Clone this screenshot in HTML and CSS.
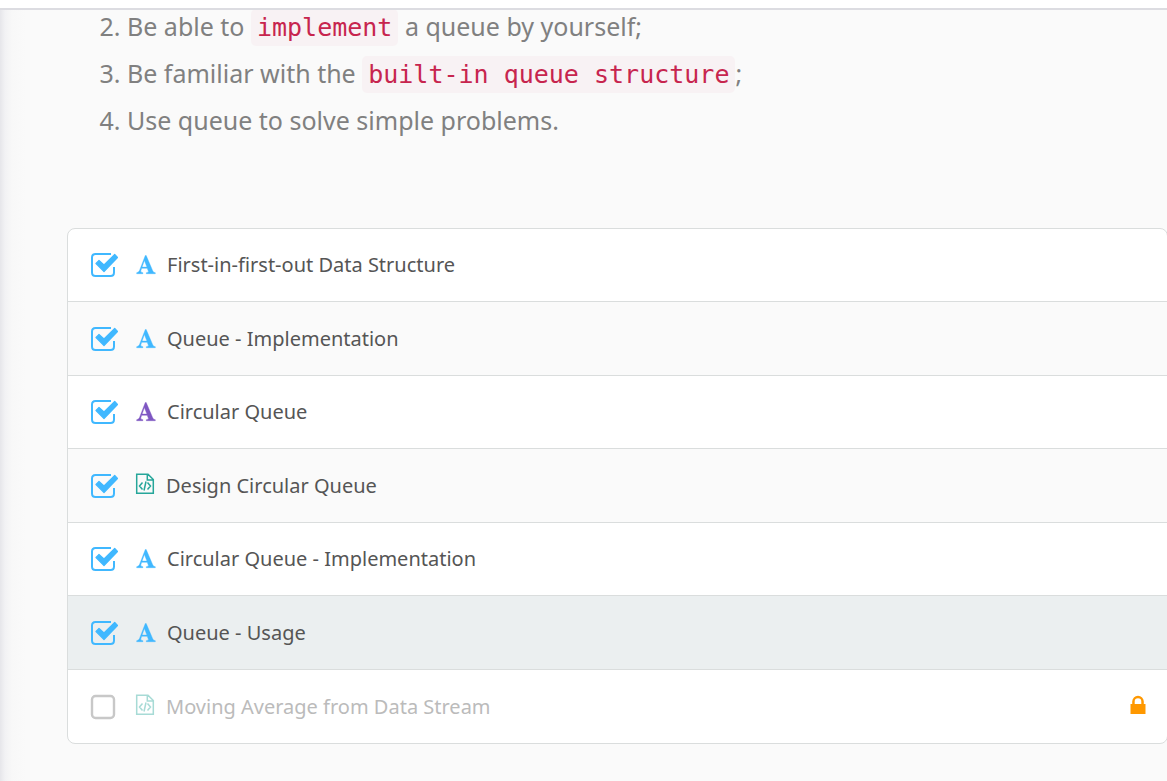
FILE: index.html
```html
<!DOCTYPE html>
<html lang="en">
<head>
<meta charset="utf-8">
<title>Queue: First-in-first-out</title>
<link rel="stylesheet" href="styles.css">
</head>
<body>
<svg class="sprite" aria-hidden="true">
  <symbol id="checked" viewBox="0 0 28 26">
    <path d="M21 2H5.500Q2 2 2 5.500V20.500Q2 24 5.500 24H20.500Q24 24 24 20.500V15" fill="none" stroke="currentColor" stroke-width="2"/>
    <path d="M6 11.500L9 8.500L14 13L24.700 2.500L27.500 5.500L14 19.500Z" fill="currentColor" stroke="currentColor" stroke-width="1.200" stroke-linejoin="round"/>
  </symbol>
  <symbol id="unchecked" viewBox="0 0 28 26">
    <rect x="2" y="2" width="22" height="22" rx="3.500" fill="none" stroke="currentColor" stroke-width="2.400"/>
  </symbol>
  <symbol id="article" viewBox="0 0 20 20">
    <path d="M10.200 0.500L16.800 16Q17.500 17.600 19.300 17.700V18.700H10.300V17.700Q13 17.600 12.300 16L11.200 13.300H5.700L4.900 15.500Q4.200 17.600 6.900 17.700V18.700H0.700V17.700Q2.700 17.500 3.500 15.500L9.300 0.500ZM8.400 5.500L6.100 12.100H10.900Z" fill="currentColor" stroke="currentColor" stroke-width="0.400" fill-rule="evenodd"/>
  </symbol>
  <symbol id="code" viewBox="0 0 20 22">
    <path d="M1.700 1.200H13L18.300 6.500V20.300H1.700ZM12.300 1.200V7H18.300M7.500 9.500L4.500 13L7.500 16.500M12.500 9.500L15.500 13L12.500 16.500M11 8.500L9 17.500" fill="none" stroke="currentColor" stroke-width="1.500"/>
  </symbol>
  <symbol id="lock" viewBox="0 0 16 20">
    <path d="M0.500 9H2.200V6.500A5.800 5.800 0 0 1 13.800 6.500V9H15.500V19H0.500ZM4.700 9H11.300V6.500A3.300 3.300 0 0 0 4.700 6.500Z" fill="currentColor" fill-rule="evenodd"/>
  </symbol>
</svg>
<header class="topbar"></header>
<main class="content">
  <ol class="goals" start="2">
    <li>Be able to <code>implement</code> a queue by yourself;</li>
    <li>Be familiar with the <code>built-in queue structure</code>;</li>
    <li>Use queue to solve simple problems.</li>
  </ol>
  <ul class="chapter">
    <li class="item">
      <span class="tick"><input type="checkbox" id="c1" checked><svg><use href="#checked"/></svg></span>
      <svg class="kind article"><use href="#article"/></svg>
      <label class="title" for="c1">First-in-first-out Data Structure</label>
    </li>
    <li class="item">
      <span class="tick"><input type="checkbox" id="c2" checked><svg><use href="#checked"/></svg></span>
      <svg class="kind article"><use href="#article"/></svg>
      <label class="title" for="c2">Queue - Implementation</label>
    </li>
    <li class="item">
      <span class="tick"><input type="checkbox" id="c3" checked><svg><use href="#checked"/></svg></span>
      <svg class="kind article visited"><use href="#article"/></svg>
      <label class="title" for="c3">Circular Queue</label>
    </li>
    <li class="item">
      <span class="tick"><input type="checkbox" id="c4" checked><svg><use href="#checked"/></svg></span>
      <svg class="kind code"><use href="#code"/></svg>
      <label class="title" for="c4">Design Circular Queue</label>
    </li>
    <li class="item">
      <span class="tick"><input type="checkbox" id="c5" checked><svg><use href="#checked"/></svg></span>
      <svg class="kind article"><use href="#article"/></svg>
      <label class="title" for="c5">Circular Queue - Implementation</label>
    </li>
    <li class="item current">
      <span class="tick"><input type="checkbox" id="c6" checked><svg><use href="#checked"/></svg></span>
      <svg class="kind article"><use href="#article"/></svg>
      <label class="title" for="c6">Queue - Usage</label>
    </li>
    <li class="item locked">
      <span class="tick"><input type="checkbox" id="c7"><svg><use href="#unchecked"/></svg></span>
      <svg class="kind code"><use href="#code"/></svg>
      <label class="title" for="c7">Moving Average from Data Stream</label>
      <svg class="lock"><use href="#lock"/></svg>
    </li>
  </ul>
</main>
</body>
</html>
```
FILE: styles.css
```css
* { box-sizing: border-box; }
body {
  margin: 0;
  min-height: 100vh;
  display: flex;
  flex-direction: column;
  background: #fafafa;
  font-family: "Noto Sans", "Open Sans", sans-serif;
}
.sprite { position: absolute; width: 0; height: 0; }
.topbar {
  height: 10px;
  background: #fff;
  border-bottom: 2px solid #dcdce1;
}
.content {
  flex: 1;
  padding-left: 67px;
  overflow: hidden;
  background: linear-gradient(to right, #e6e6ea 0, #f2f2f4 5px, #f8f8f8 12px, #fafafa 26px);
}
.goals {
  margin: 0;
  padding: 0 0 0 60px;
  color: #808080;
  font-size: 25px;
  line-height: 32px;
}
.goals li { margin-bottom: 14px; }
.goals code {
  padding: 4px 6px;
  border-radius: 5px;
  background: #f8f2f4;
  color: #c7254e;
  font-family: "DejaVu Sans Mono", monospace;
  font-size: 25px;
  line-height: 30px;
}
.chapter {
  margin: 92px -1px 0 0;
  padding: 0;
  list-style: none;
  border: 1px solid #dadddd;
  border-radius: 8px;
  background: #fff;
  overflow: hidden;
}
.item {
  display: flex;
  align-items: center;
  min-height: 73px;
  padding: 0 21px 0 22px;
  border-bottom: 1px solid #dadddd;
  font-size: 20px;
  line-height: 28px;
  color: #555;
}
.item:nth-child(even) { min-height: 74px; background: #fafafa; }
.item.current { background: #ebeff0; }
.item:last-child { border-bottom: 0; }
.tick { display: grid; color: #40b8ff; }
.tick input, .tick svg {
  grid-area: 1 / 1;
  width: 28px;
  height: 26px;
  margin: 0;
  overflow: visible;
}
.tick input { appearance: none; }
.tick svg { pointer-events: none; }
.kind { flex: none; width: 20px; margin: 0 11px 0 18px; }
.article { height: 20px; color: #40b8ff; }
.visited { color: #7e57c2; }
.code { height: 22px; margin: 0 11px 3px 17px; color: #26a69a; }
.title { flex: 1; }
.locked .tick { color: #c8c8c8; }
.locked .code { opacity: 0.4; }
.locked .title { color: #bbb; }
.lock { width: 16px; height: 20px; color: #ff9800; margin-bottom: 3px; }
```
